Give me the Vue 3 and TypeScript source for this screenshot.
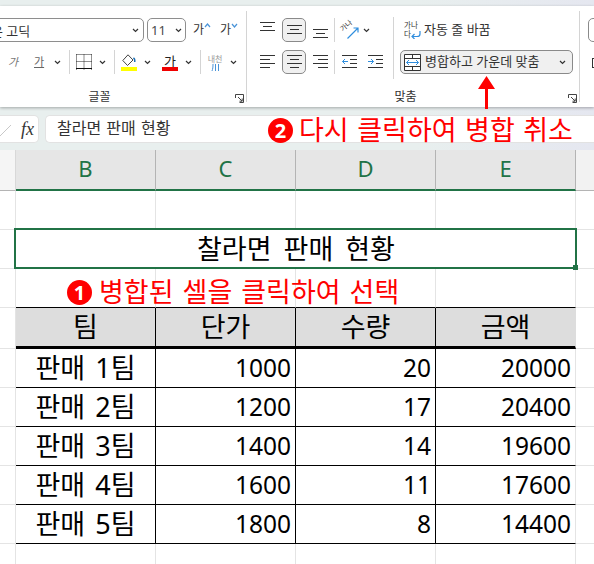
<script setup lang="ts">
const columns: string[] = ['B', 'C', 'D', 'E']
const headers: string[] = ['팀', '단가', '수량', '금액']
const rows: (string | number)[][] = [
  ['판매 1팀', 1000, 20, 20000],
  ['판매 2팀', 1200, 17, 20400],
  ['판매 3팀', 1400, 14, 19600],
  ['판매 4팀', 1600, 11, 17600],
  ['판매 5팀', 1800, 8, 14400],
]
</script>

<template>
  <div class="page">
    <div class="topstrip"></div>

    <section class="ribbon">
      <div class="group font-group">
        <div class="row first">
          <div class="combo font-name"><span class="font-text">맑은 고딕</span>
            <svg class="chev" width="7" height="5" viewBox="0 0 7 5"><path d="M1 1l2.5 2.5L6 1" /></svg>
          </div>
          <div class="combo font-size"><span>11</span>
            <svg class="chev" width="7" height="5" viewBox="0 0 7 5"><path d="M1 1l2.5 2.5L6 1" /></svg>
          </div>
          <span class="grow-btn">가<svg width="7" height="5" viewBox="0 0 7 5"><path d="M1 4l2.5-3L6 4" /></svg></span>
          <span class="grow-btn shrink">가<svg width="7" height="5" viewBox="0 0 7 5"><path d="M1 1l2.5 3L6 1" /></svg></span>
        </div>
        <div class="row second">
          <span class="ga italic">가</span>
          <span class="ga under">가</span>
          <svg class="chev c1" width="7" height="5" viewBox="0 0 7 5"><path d="M1 1l2.5 2.5L6 1" /></svg>
          <i class="vline v1"></i>
          <svg class="border-ico" width="16" height="16" viewBox="0 0 16 16">
            <path d="M.5 .5h15M.5 7.5h15M.5 .5v15M8 .5v15M15.5 .5v15" stroke="#222" stroke-dasharray="1 1" fill="none" />
            <path d="M0 14.5h16" stroke="#111" fill="none" />
          </svg>
          <svg class="chev c2" width="7" height="5" viewBox="0 0 7 5"><path d="M1 1l2.5 2.5L6 1" /></svg>
          <i class="vline v2"></i>
          <div class="colour fill">
            <svg width="16" height="13" viewBox="0 0 16 13">
              <path d="M7 .8L1.800 6.500 6.500 11.500 12 6z" fill="#fff" stroke="#444" />
              <path d="M12.500 3.500c1.600 0 2.200 1.500 2 4.500h-1.500c0-1.700 0-3-1-3.500z" fill="#1c6fb4" />
            </svg>
            <b class="bar yellow"></b>
          </div>
          <svg class="chev c3" width="7" height="5" viewBox="0 0 7 5"><path d="M1 1l2.5 2.5L6 1" /></svg>
          <div class="colour fcolour">
            <span>가</span>
            <b class="bar red"></b>
          </div>
          <svg class="chev c4" width="7" height="5" viewBox="0 0 7 5"><path d="M1 1l2.5 2.5L6 1" /></svg>
          <i class="vline v3"></i>
          <div class="phonetic">
            <span>내천</span>
            <svg width="8" height="7" viewBox="0 0 8 7"><path d="M1 7c.8-2 1-4 1-7M4.500 0v7M7.500 0v7" stroke="#4a94d8" fill="none" /></svg>
          </div>
          <svg class="chev c5" width="7" height="5" viewBox="0 0 7 5"><path d="M1 1l2.5 2.5L6 1" /></svg>
        </div>
        <div class="group-label">글꼴
          <svg class="launcher" width="9" height="9" viewBox="0 0 9 9">
            <path d="M.5 4V.5H8.500V8.500H4.500M3 3l4 4M7.200 4.500v2.700H4.500" stroke="#444" fill="none" />
          </svg>
        </div>
      </div>

      <div class="group align-group">
        <div class="align-grid">
          <div class="row first a-row">
            <svg class="a-icon" width="15" height="16" viewBox="0 0 15 16"><path d="M0 .5h15M3 4.500h9M0 8.500h15" /></svg>
            <div class="sel">
              <svg width="15" height="16" viewBox="0 0 15 16"><path d="M0 3.500h15M3 7.500h9M0 11.500h15" /></svg>
            </div>
            <svg class="a-icon" width="15" height="16" viewBox="0 0 15 16"><path d="M0 7.500h15M3 11.500h9M0 15.500h15" /></svg>
            <i class="vline-s"></i>
            <div class="orient">
              <span>가나</span>
              <svg width="12" height="12" viewBox="0 0 12 12"><path d="M.5 11.500L11 1M6.500 1H11V5.500" stroke="#2f8ede" stroke-width="1.200" fill="none" /></svg>
            </div>
            <svg class="chev o-chev" width="7" height="5" viewBox="0 0 7 5"><path d="M1 1l2.5 2.5L6 1" /></svg>
          </div>
          <div class="row second a-row">
            <svg class="a-icon" width="15" height="16" viewBox="0 0 15 16"><path d="M0 1.500h15M0 5.500h10M0 9.500h15M0 13.500h10" /></svg>
            <div class="sel">
              <svg width="15" height="16" viewBox="0 0 15 16"><path d="M0 1.500h15M3 5.500h9M0 9.500h15M3 13.500h9" /></svg>
            </div>
            <svg class="a-icon" width="15" height="16" viewBox="0 0 15 16"><path d="M0 1.500h15M5 5.500h10M0 9.500h15M5 13.500h10" /></svg>
            <i class="vline-s"></i>
            <svg class="indent i1" width="15" height="13" viewBox="0 0 15 13"><path d="M0 .5h15M8 4.500h7M8 8.500h7M0 12.500h15" stroke="#333" fill="none" /><path d="M6 6.500H.5M3 4l-2.500 2.500L3 9" stroke="#2f8ede" fill="none" /></svg>
            <svg class="indent i2" width="15" height="13" viewBox="0 0 15 13"><path d="M0 .5h15M8 4.500h7M8 8.500h7M0 12.500h15" stroke="#333" fill="none" /><path d="M0 6.500h5.500M3 4l2.500 2.500L3 9" stroke="#2f8ede" fill="none" /></svg>
          </div>
        </div>
        <i class="vline-l"></i>
        <div class="merge-col">
          <div class="wrap-line">
            <div class="wrap-ico">
              <span>가나</span><span class="wrap-second">다<svg width="10" height="8" viewBox="0 0 10 8"><path d="M9 0v3c0 2-1 2.500-3 2.500H1M3.500 3L1 5.500 3.500 8" stroke="#2f8ede" stroke-width="1.200" fill="none" /></svg></span>
            </div>
            <span class="ribbon-text">자동 줄 바꿈</span>
          </div>
          <div class="merge-btn">
            <svg width="17" height="17" viewBox="0 0 17 17">
              <path d="M.5 .5h16v16H.5z" fill="#fff" stroke="#333" />
              <path d="M.5 4.500h16M.5 12.500h16M8.500 .5v4M8.500 12.500v4" stroke="#333" fill="none" />
              <path d="M2.500 8.500h12M5 6L2.500 8.500 5 11M12 6l2.500 2.500L12 11" stroke="#2f8ede" fill="none" />
            </svg>
            <span class="ribbon-text">병합하고 가운데 맞춤</span>
            <svg class="chev m-chev" width="7" height="5" viewBox="0 0 7 5"><path d="M1 1l2.5 2.5L6 1" /></svg>
          </div>
        </div>
        <div class="group-label">맞춤
          <svg class="launcher" width="9" height="9" viewBox="0 0 9 9">
            <path d="M.5 4V.5H8.500V8.500H4.500M3 3l4 4M7.200 4.500v2.700H4.500" stroke="#444" fill="none" />
          </svg>
        </div>
      </div>

      <div class="next-group">
        <div class="next-btn"></div>
        <div class="next-box"></div>
      </div>
    </section>

    <section class="formula">
      <div class="fx-box">
        <svg width="12" height="14" viewBox="0 0 12 14"><path d="M0 14L11 3" stroke="#c8c8c8" fill="none" /></svg>
        <span class="fx">fx</span>
      </div>
      <div class="f-input">찰라면 판매 현황</div>
    </section>

    <section class="sheet">
      <div class="hd corner"></div>
      <div v-for="c in columns" :key="c" class="hd col">{{ c }}</div>
      <div class="hd rest"></div>

      <div class="gutter"></div>
      <div v-for="c in columns" :key="c" class="blank"></div>
      <div class="gutter last"></div>

      <div class="gutter"></div>
      <div class="title-cell">
        찰라면 판매 현황
        <div class="frame"><b class="handle"></b></div>
      </div>
      <div class="gutter last"></div>

      <div class="gutter"></div>
      <div v-for="c in columns" :key="c" class="blank above-table"></div>
      <div class="gutter last"></div>

      <div class="gutter th-row"></div>
      <div v-for="(h, i) in headers" :key="h" class="th" :class="{ edge: i === headers.length - 1 }">{{ h }}</div>
      <div class="gutter last"></div>

      <template v-for="r in rows" :key="String(r[0])">
        <div class="gutter"></div>
        <div class="td name">{{ r[0] }}</div>
        <div v-for="(v, i) in r.slice(1)" :key="i" class="td num" :class="{ edge: i === r.length - 2 }">{{ v }}</div>
        <div class="gutter last"></div>
      </template>

      <div class="gutter end"></div>
      <div v-for="c in columns" :key="c" class="blank end"></div>
      <div class="gutter last end"></div>
    </section>

    <div class="callout one"><span class="badge">1</span><span class="c-text">병합된 셀을 클릭하여 선택</span></div>
    <div class="callout two"><span class="badge">2</span><span class="c-text">다시 클릭하여 병합 취소</span></div>
    <svg class="arrow" width="17" height="33" viewBox="0 0 17 33">
      <path d="M8.500 0L17 13H10V33H7V13H0z" fill="#f00" />
    </svg>
  </div>
</template>

<style>
html, body { margin: 0; background: #fff; }
</style>

<style scoped>
.page {
  position: relative;
  width: 594px;
  height: 564px;
  overflow: hidden;
  font-family: "Noto Sans", "Noto Sans CJK KR", sans-serif;
  color: #000;
  background: linear-gradient(90deg, #e8efee 0%, #e8efee 70%, #e5e7f0 100%);
}
.topstrip { height: 6px; }

/* ribbon */
.ribbon {
  position: relative;
  display: flex;
  height: 101px;
  background: #fff;
  box-shadow: 0 1px 3px rgba(0, 0, 0, .3);
  color: #333;
}
.group { position: relative; box-sizing: border-box; height: 100%; flex: none; }
.group::after {
  content: "";
  position: absolute;
  right: 0;
  top: 5px;
  bottom: 5px;
  width: 1px;
  background: #d4d4d4;
}
.font-group { width: 247px; }
.align-group { width: 333px; display: flex; }
.row { display: flex; align-items: center; height: 24px; }
.row.first { margin-top: 12px; }
.row.second { margin-top: 8px; }
.group-label {
  position: absolute;
  left: 0;
  right: 0;
  bottom: 2px;
  height: 17px;
  line-height: 17px;
  text-align: center;
  font-size: 12px;
  color: #333;
}
.font-group .group-label { padding-right: 48px; box-sizing: border-box; }
.align-group .group-label { padding-right: 16px; box-sizing: border-box; }
.launcher { position: absolute; right: 3px; bottom: 2px; }
.chev { flex: none; }
.chev path { fill: none; stroke: #333; stroke-width: 1.2; }

.combo {
  box-sizing: border-box;
  height: 24px;
  display: flex;
  align-items: center;
  justify-content: space-between;
  border: 1px solid #8e8e8e;
  border-radius: 5px;
  font-size: 13px;
  color: #333;
  white-space: nowrap;
}
.font-name { width: 175px; margin-left: -31px; padding: 0 4px 0 9px; }
.font-size { width: 39px; margin-left: 3px; padding: 0 3px 0 3px; color: #4a4a4a; }
.grow-btn {
  display: flex;
  margin-left: 7px;
  width: 17px;
  flex: none;
  font-size: 12px;
  line-height: 24px;
  height: 24px;
}
.grow-btn svg { margin-top: 5px; flex: none; }
.grow-btn svg path { fill: none; stroke: #4a94d8; stroke-width: 1.2; }
.shrink { margin-left: 10px; }

.ga { font-size: 11px; width: 11px; flex: none; line-height: 16px; color: #777; }
.italic { margin-left: 8px; font-style: italic; }
.under { margin-left: 15px; text-decoration: underline; color: #666; }
.c1 { margin-left: 9px; }
.vline { display: block; flex: none; width: 1px; height: 24px; background: #d4d4d4; }
.v1 { margin-left: 8px; }
.border-ico { margin-left: 6px; flex: none; }
.c2 { margin-left: 7px; }
.v2 { margin-left: 8px; }
.colour { position: relative; width: 16px; height: 17px; flex: none; display: flex; justify-content: center; }
.fill { margin-left: 6px; }
.bar { position: absolute; left: 0; right: 0; bottom: 0; height: 4px; }
.yellow { background: #ffff00; }
.red { background: #f00000; }
.c3 { margin-left: 7px; }
.fcolour { margin-left: 11px; font-size: 13px; line-height: 14px; color: #222; }
.c4 { margin-left: 7px; }
.v3 { margin-left: 8px; }
.phonetic {
  margin-left: 6px;
  width: 16px;
  flex: none;
  display: flex;
  flex-direction: column;
  align-items: center;
  font-size: 8px;
  line-height: 9px;
  color: #999;
  white-space: nowrap;
}
.phonetic svg { margin-top: 1px; }
.c5 { margin-left: 7px; }

.align-grid { width: 146px; flex: none; }
.a-row { padding-left: 13px; }
.a-row svg path { fill: none; stroke: #333; }
.a-icon { flex: none; }
.a-row .indent path:last-child { stroke: #2f8ede; }
.a-row .orient svg path { stroke: #2f8ede; }
.sel {
  box-sizing: border-box;
  width: 24px;
  height: 24px;
  margin-left: 7px;
  display: flex;
  align-items: center;
  justify-content: center;
  flex: none;
  background: #f0f0f0;
  border: 1px solid #8a8a8a;
  border-radius: 5px;
}
.sel + .a-icon { margin-left: 7px; }
.vline-s { display: block; width: 1px; height: 24px; margin-left: 6px; background: #d4d4d4; flex: none; }
.orient { position: relative; width: 18px; height: 18px; margin-left: 6px; flex: none; }
.orient span {
  position: absolute;
  left: -1px;
  top: 1px;
  font-size: 7px;
  line-height: 8px;
  transform: rotate(-40deg);
  white-space: nowrap;
  color: #333;
}
.orient svg { position: absolute; right: 0; bottom: 0; }
.o-chev { margin-left: 4px; }
.indent { flex: none; margin-bottom: 2px; }
.i1 { margin-left: 7px; }
.i2 { margin-left: 11px; }

.vline-l { display: block; width: 1px; height: 62px; margin-top: 11px; background: #d4d4d4; flex: none; }
.merge-col { margin-left: 6px; flex: none; }
.wrap-line { display: flex; align-items: center; height: 24px; margin-top: 12px; padding-left: 4px; gap: 3px; }
.wrap-ico { width: 17px; font-size: 7.5px; line-height: 9px; color: #333; flex: none; }
.wrap-ico span { display: block; white-space: nowrap; }
.wrap-second { display: flex !important; align-items: center; }
.ribbon-text { font-size: 13px; color: #333; white-space: nowrap; margin-top: -3px; }
.merge-btn {
  box-sizing: border-box;
  display: flex;
  align-items: center;
  gap: 4px;
  width: 173px;
  height: 24px;
  margin-top: 8px;
  padding: 0 3px;
  background: #f0f0f0;
  border: 1px solid #8a8a8a;
  border-radius: 5px;
}
.merge-btn > svg:first-child { flex: none; }
.m-chev { margin-left: 16px; }

.next-group { margin-left: 8px; padding-top: 12px; flex: none; }
.next-btn { box-sizing: border-box; width: 24px; height: 24px; border: 1px solid #8a8a8a; border-radius: 5px; }
.next-box { box-sizing: border-box; width: 8px; height: 10px; margin: 16px 0 0 4px; border: 1px solid #333; border-right: 0; }

/* formula bar */
.formula {
  display: flex;
  gap: 6px;
  height: 43px;
  box-sizing: border-box;
  padding: 8px 0 7px;
}
.fx-box {
  box-sizing: border-box;
  width: 39px;
  height: 28px;
  display: flex;
  align-items: center;
  justify-content: space-between;
  padding: 0 4px 0 0;
  background: #fff;
  border: 1px solid #e2e2e2;
  border-left: 0;
  border-radius: 0 5px 5px 0;
}
.fx {
  font-family: "Liberation Serif", serif;
  font-style: italic;
  font-size: 18px;
  color: #333;
}
.f-input {
  flex: 1;
  height: 28px;
  box-sizing: border-box;
  padding-left: 11px;
  line-height: 25px;
  font-size: 16px;
  word-spacing: 1px;
  color: #333;
  background: #fff;
  border: 1px solid #e2e2e2;
  border-right: 0;
  border-radius: 5px 0 0 5px;
  white-space: nowrap;
}

/* sheet */
.sheet {
  display: grid;
  grid-template-columns: 16px repeat(4, 140px) 18px;
  grid-template-rows: 41px 39px 39px 39px 41px 39px 39px 39px 39px 39px 20px;
  height: 414px;
  background: #fff;
}
.hd {
  box-sizing: border-box;
  border-bottom: 2px solid #217346;
  border-right: 1px solid #b4b4b4;
  background: #e6e6e6;
  color: #217346;
  font-size: 22px;
  line-height: 36px;
  text-align: center;
}
.corner, .rest {
  background: #f5f5f5;
  border-bottom: 1px solid #b4b4b4;
  border-right-color: #d8d8d8;
}
.rest { border-right: 0; background: #f2f2f2; }
.gutter, .blank { box-sizing: border-box; border-bottom: 1px solid #e4e4e4; border-right: 1px solid #e4e4e4; }
.gutter.last { border-right: 0; }
.above-table { border-bottom-color: #000; }
.end { border-bottom: 0; }
.title-cell {
  grid-column: span 4;
  position: relative;
  box-sizing: border-box;
  padding-bottom: 2px;
  text-align: center;
  font-size: 27px;
  word-spacing: 5px;
  line-height: 38px;
  white-space: nowrap;
}
.frame {
  position: absolute;
  left: -2px;
  top: -2px;
  right: -1px;
  bottom: 0;
  border: 2px solid #217346;
}
.handle {
  position: absolute;
  right: -3px;
  bottom: -3px;
  width: 5px;
  height: 5px;
  background: #217346;
}
.th, .td {
  box-sizing: border-box;
  border-right: 1px solid #000;
  border-bottom: 1px solid #000;
  white-space: nowrap;
  font-size: 27px;
  line-height: 37px;
}
.th {
  background: #dddddd;
  border-bottom: 3px solid #000;
  text-align: center;
}
.edge { border-right-color: #e4e4e4; }
.th.edge { border-right-color: #dddddd; }
.name { text-align: center; word-spacing: 3px; }
.num { text-align: right; padding-right: 4px; font-size: 24.5px; }

/* callouts */
.callout {
  position: absolute;
  display: flex;
  align-items: center;
  gap: 7px;
  color: #ff0000;
  font-size: 27px;
  line-height: 30px;
  white-space: nowrap;
}
.c-text { word-spacing: 2px; }
.one { left: 67px; top: 277px; }
.two { left: 268px; top: 115px; }
.two .c-text { word-spacing: 1.500px; margin-left: -1px; }
.badge {
  width: 25px;
  height: 25px;
  border-radius: 50%;
  background: #f00;
  color: #fff;
  font-size: 20px;
  line-height: 25px;
  font-weight: 700;
  text-align: center;
  flex: none;
}
.arrow { position: absolute; left: 478px; top: 76px; }
</style>
